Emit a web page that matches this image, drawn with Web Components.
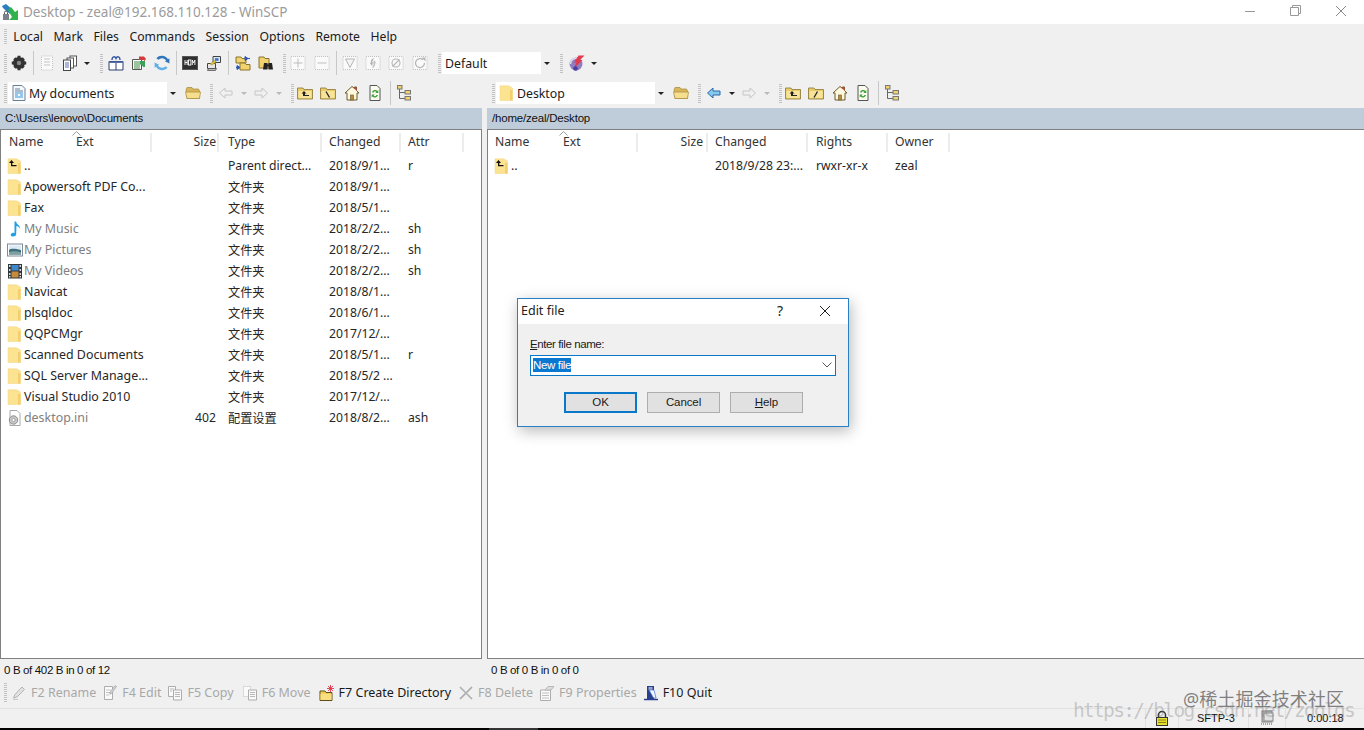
<!DOCTYPE html>
<html>
<head>
<meta charset="utf-8">
<title>WinSCP</title>
<style>
  html, body { margin: 0; height: 730px; overflow: hidden; background: #f0f0f0; }
  body { font: 12.5px "Noto Sans", "Noto Sans CJK SC", sans-serif; color: #1a1a1a; position: relative; }
  .app { display: flex; flex-direction: column; height: 730px; }
  .panels { display: flex; flex: 1; min-height: 0; }
</style>
</head>
<body>
<div class="app">
  <title-bar></title-bar>
  <menu-bar></menu-bar>
  <tool-strip>
    <tb-grip></tb-grip>
    <tb-icon name="gear"></tb-icon>
    <tb-sep m="3"></tb-sep>
    <tb-icon name="docdis" m="1"></tb-icon>
    <tb-icon name="copies"></tb-icon>
    <tb-arrow></tb-arrow>
    <tb-grip m="8"></tb-grip>
    <tb-icon name="queue" m="1"></tb-icon>
    <tb-icon name="transfer"></tb-icon>
    <tb-icon name="sync"></tb-icon>
    <tb-sep m="3"></tb-sep>
    <tb-icon name="hom" m="1"></tb-icon>
    <tb-icon name="putty" m="1"></tb-icon>
    <tb-sep m="3"></tb-sep>
    <tb-icon name="compare" m="2"></tb-icon>
    <tb-icon name="find" m="0"></tb-icon>
    <tb-grip m="6"></tb-grip>
    <tb-icon name="plus"></tb-icon>
    <tb-icon name="minus" m="1"></tb-icon>
    <tb-sep m="3"></tb-sep>
    <tb-icon name="funnel" m="1"></tb-icon>
    <tb-icon name="swapdis"></tb-icon>
    <tb-icon name="nodis"></tb-icon>
    <tb-icon name="rotdis" m="1"></tb-icon>
    <tb-grip m="7"></tb-grip>
    <tool-combo w="111" m="1">Default</tool-combo>
    <tb-grip m="7"></tb-grip>
    <tb-icon name="bolt" m="2"></tb-icon>
    <tb-arrow m="0"></tb-arrow>
  </tool-strip>
  <div class="panels">
    <file-panel path="C:\Users\lenovo\Documents" status="0 B of 402 B in 0 of 12" side="left">
      <path-toolbar slot="bar" label="My documents" combo-icon="mydocs" back="off" root="back"></path-toolbar>
      <file-head slot="head" side="left" labels="Name|Ext|Size|Type|Changed|Attr"></file-head>
      <file-row side="left" icon="up" name=".." cells="|Parent direct...|2018/9/1...|r"></file-row>
      <file-row side="left" icon="folder" name="Apowersoft PDF Co..." cells="|文件夹|2018/9/1...|"></file-row>
      <file-row side="left" icon="folder" name="Fax" cells="|文件夹|2018/5/1...|"></file-row>
      <file-row side="left" icon="music" name="My Music" dim cells="|文件夹|2018/2/2...|sh"></file-row>
      <file-row side="left" icon="picture" name="My Pictures" dim cells="|文件夹|2018/2/2...|sh"></file-row>
      <file-row side="left" icon="video" name="My Videos" dim cells="|文件夹|2018/2/2...|sh"></file-row>
      <file-row side="left" icon="folder" name="Navicat" cells="|文件夹|2018/8/1...|"></file-row>
      <file-row side="left" icon="folder" name="plsqldoc" cells="|文件夹|2018/6/1...|"></file-row>
      <file-row side="left" icon="folder" name="QQPCMgr" cells="|文件夹|2017/12/...|"></file-row>
      <file-row side="left" icon="folder" name="Scanned Documents" cells="|文件夹|2018/5/1...|r"></file-row>
      <file-row side="left" icon="folder" name="SQL Server Manage..." cells="|文件夹|2018/5/2 ...|"></file-row>
      <file-row side="left" icon="folder" name="Visual Studio 2010" cells="|文件夹|2017/12/...|"></file-row>
      <file-row side="left" icon="ini" name="desktop.ini" dim cells="402|配置设置|2018/8/2...|ash"></file-row>
    </file-panel>
    <file-panel path="/home/zeal/Desktop" status="0 B of 0 B in 0 of 0" side="right">
      <path-toolbar slot="bar" label="Desktop" combo-icon="folder" back="on" root="slash"></path-toolbar>
      <file-head slot="head" side="right" labels="Name|Ext|Size|Changed|Rights|Owner"></file-head>
      <file-row side="right" icon="up" name=".." cells="|2018/9/28 23:...|rwxr-xr-x|zeal"></file-row>
    </file-panel>
  </div>
  <fkey-bar></fkey-bar>
  <status-strip></status-strip>
</div>
<edit-dialog></edit-dialog>
<water-mark></water-mark>

<script>
// --- icon shapes, all on a 16x16 box ---
const folderBody = (extra = '') => `<path d="M1 .8h8.500L13.500 3v12.500H1z" fill="#fce391" stroke="#f3d582" stroke-width=".5"/><path d="M11 5h2.500v10.500H11z" fill="#f4cf70"/>${extra}`;
const openFolder = '<path d="M1 5l1-2.500h5l1 1.500h5.500l1 2v7.500H2z" fill="#d9b659" stroke="#a68a3a" stroke-width=".7"/><path d="M.5 7h15l-1 6.500H2z" fill="#f5de8e" stroke="#a68a3a" stroke-width=".7"/>';
const flatFolder = (inner) => `<path d="M.5 3h5.500l1 1.500h8.500V14H.5z" fill="#e9cd6b" stroke="#8c7430" stroke-width=".8"/><path d="M1.500 6h13v7h-13z" fill="#f7e39a"/>${inner}`;
const dots = 'fill="#fafafa" stroke="#b5b5b5" stroke-width=".8" stroke-dasharray="1 1"';
const ICONS = {
  gear: '<g fill="#333"><circle cx="8" cy="8" r="6"/><path d="M6.500 .8h3v3h-3zM6.500 12.200h3v3h-3zM.8 6.500h3v3h-3zM12.200 6.500h3v3h-3z"/><path d="M2.300 4.400l2.100-2.100 2 2-2.100 2.100zM9.600 11.700l2.100-2.100 2 2-2.100 2.100zM11.700 2.300l2.100 2.100-2 2-2.100-2.100zM4.400 9.600l2.100 2.100-2 2-2.100-2.100z"/></g><circle cx="8" cy="8" r="2.200" fill="#888"/>',
  docdis: `<rect x="2.500" y="1" width="11" height="14" ${dots}/><path d="M5 4h6M5 7h6M5 10h6" stroke="#c4c4c4"/>`,
  copies: '<rect x="8" y="1" width="6.500" height="10" fill="#fff" stroke="#555"/><rect x="5" y="3" width="6.500" height="10" fill="#fff" stroke="#555"/><rect x="1.500" y="5" width="7" height="10.500" fill="#fff" stroke="#444"/><path d="M3 8h4M3 10h4M3 12h4" stroke="#5a6fb0"/>',
  queue: '<path d="M1 6.500h14V15H1z" fill="#fff" stroke="#2c3f70"/><path d="M8 6.500V15" stroke="#2c3f70"/><path d="M1 6.500h14v1.500H1z" fill="#5470b0"/><path d="M4 5c0-4 3-4 4-1.500C9 1 12 1 12 5" fill="none" stroke="#3050a0" stroke-width="1.300"/>',
  transfer: '<path d="M1.500 4.500h9v10h-9z" fill="#fff" stroke="#555"/><path d="M3 7h6M3 9h6M3 11h6M3 13h6" stroke="#3a8a3a"/><path d="M8 1.500l5 0 2 2.500-2 2.500V5H8z" fill="#d63b3b"/><path d="M9 6h5v6h-1.500L10 9.500H9z" fill="#3aa35a"/>',
  sync: '<path d="M8 .8a7.200 7.200 0 0 1 6 3.400l1.400-.9v5.200l-4.500-2.200 1.200-.8A4.800 4.800 0 0 0 4.500 4.800L2.300 3.200A7.200 7.200 0 0 1 8 .8z" fill="#2f76bd"/><path d="M8 15.200a7.200 7.200 0 0 1-6-3.400l-1.400.9V7.500l4.500 2.200-1.200.8a4.800 4.800 0 0 0 7.600.7l2.200 1.600A7.200 7.200 0 0 1 8 15.200z" fill="#5fb0ea"/>',
  hom: '<rect x=".5" y="1.500" width="15" height="13" fill="#2f2f2f" stroke="#555"/><path d="M3 5v5M3 7.500h2.200M5.200 5v5M10.300 10V5l1.300 3 1.300-3v5" stroke="#fff" stroke-width=".9" fill="none"/><rect x="6.500" y="5" width="2.400" height="5" fill="none" stroke="#fff" stroke-width=".9"/>',
  putty: '<path d="M1.500 8.500h8v5h-8z" fill="#e6e6e6" stroke="#444"/><path d="M2.500 13.500h8l-1 2h-8z" fill="#bbb" stroke="#444" stroke-width=".7"/><path d="M7 1.500h7.500v6H7z" fill="#d8e6f5" stroke="#444"/><path d="M9 3.200h3.500v2.600H9z" fill="#3f6fbd"/><path d="M4 9l5-3.500 1 1.500-4 3z" fill="#e9cd35" stroke="#8a7a20" stroke-width=".5"/>',
  compare: '<path d="M1 2h5l1 1.500h4V8H1z" fill="#f1d26d" stroke="#8a7330"/><path d="M5 8h5l1 1.500h4V15H5z" fill="#f1d26d" stroke="#8a7330"/><path d="M10 1.500l3 2-3 2zM15 3.500h-3" fill="#2f55b5" stroke="#2f55b5"/><path d="M5 12.500l-3-2v4zM1 12.500h2" fill="#2f55b5" stroke="#2f55b5"/>',
  find: '<path d="M1 2h5l1 1.500h4V13H1z" fill="#f1d26d" stroke="#8a7330"/><path d="M6 8h3.500v6.500H5z M10.500 8H14l1 6.500h-4.500z" fill="#222"/><path d="M8.500 9.500h3v2h-3z" fill="#222"/>',
  plus: `<rect x="1" y="1.500" width="14" height="13" ${dots}/><path d="M8 3.500v9M3.500 8h9" stroke="#bdbdbd"/>`,
  minus: `<rect x="1" y="1.500" width="14" height="13" ${dots}/><path d="M3.500 8h9" stroke="#bdbdbd"/>`,
  funnel: `<rect x="1" y="1.500" width="14" height="13" ${dots}/><path d="M3.500 4h9L8 12.500z" fill="#f4f4f4" stroke="#b5b5b5"/>`,
  swapdis: `<rect x="1" y="1.500" width="14" height="13" ${dots}/><path d="M9 3a4 4 0 0 0-3 5l-1.500-.5L7 11l1-4-1.200.7" fill="#b0b0b0"/><path d="M7 13a4 4 0 0 0 3-5l1.500.5L9 5 8 9l1.200-.7" fill="#c0c0c0"/>`,
  nodis: `<rect x="1" y="1.500" width="14" height="13" ${dots}/><circle cx="8" cy="8" r="4" fill="none" stroke="#b5b5b5" stroke-width="1.100"/><path d="M4.500 11.500l7-7" stroke="#b5b5b5" stroke-width="1.100"/>`,
  rotdis: `<rect x="1" y="1.500" width="14" height="13" ${dots}/><path d="M11 4.700A4.500 4.500 0 1 0 12.500 8" fill="none" stroke="#b5b5b5" stroke-width="1.300"/><path d="M9.500 2.500h4v4z" fill="#b5b5b5"/>`,
  bolt: '<circle cx="7" cy="9" r="6.500" fill="#8e7fc0"/><path d="M1.500 9a5.500 5.500 0 0 1 8-5" fill="none" stroke="#dcdcec" stroke-width="1.500"/><path d="M9.500 .5h6L11 5h2.500L4.500 14l3-6.500H5z" fill="#e33a4d"/><circle cx="6.500" cy="13.500" r="2.300" fill="#4a3fa0"/>',
  mydocs: '<path d="M2 .5h9l3 3v12H2z" fill="#f3f8fd" stroke="#6b7f93"/><path d="M4 4h5M4 6h8" stroke="#6b7f93"/><path d="M4 8h8M4 10h3M9 10h3M4 12h8" stroke="#3a93d6" stroke-width="1.100"/>',
  folder: folderBody(),
  up: folderBody('<path d="M2 5l2.500-3L7 5H5.300v2h4.200v1.300H4V5z" fill="#111"/>'),
  music: '<path d="M7.500 .5h1.600c.3 3 4.400 3.500 3.900 7.500C12.300 5.900 10.600 5.300 9.400 5.100l-.2 7.900c0 1.800-1.700 2.700-3.400 2.500C4 15.300 3.300 14 4 12.900c.9-1.200 2.400-1.300 3.500-.8z" fill="#21a0e3"/>',
  picture: '<rect x=".5" y="2" width="15" height="12" fill="#fff" stroke="#7d8a99"/><rect x="2" y="3.500" width="12" height="9" fill="#dbe9f4"/><path d="M2 8c3-2 6-1 12 0v4.500H2z" fill="#3f6f7f"/><path d="M2 10c4-1 8-1 12 .5v2H2z" fill="#7fa0a0"/>',
  video: '<rect x="1" y="1" width="14" height="14.500" fill="#33383d"/><path d="M2 2h1.500v2H2zM2 6h1.500v2H2zM2 10h1.500v2H2zM2 13h1.500v1.500H2zM12.500 2H14v2h-1.500zM12.500 6H14v2h-1.500zM12.500 10H14v2h-1.500zM12.500 13H14v1.500h-1.500z" fill="#d8d8d8"/><rect x="4.500" y="2" width="7" height="5.500" fill="#3e87c8"/><rect x="4.500" y="8.500" width="7" height="6" fill="#c58a3c"/>',
  ini: '<path d="M3 .5h7l3 3v12H3z" fill="#fff" stroke="#a8a8a8"/><circle cx="6.500" cy="10" r="4.200" fill="#c8c8c8" stroke="#8e8e8e"/><circle cx="6.500" cy="10" r="1.600" fill="#fff" stroke="#8e8e8e" stroke-width=".7"/>',
  openfolder: openFolder,
  backoff: '<path d="M7 3L1.500 8 7 13v-3h7V6H7z" fill="#f0f0f0" stroke="#c6c6c6"/>',
  backon: '<path d="M7 3L1.500 8 7 13v-3h7V6H7z" fill="#86c7ee" stroke="#2a6aa8"/>',
  fwd: '<path d="M9 3l5.500 5L9 13v-3H2V6h7z" fill="#f0f0f0" stroke="#c6c6c6"/>',
  parent: flatFolder('<path d="M6 11V8.500H4.500L7 6l2.500 2.500H8V10h4v1z" fill="#222"/>'),
  rootback: flatFolder('<path d="M6 6.500l3.500 6" stroke="#222" stroke-width="1.300"/>'),
  rootslash: flatFolder('<path d="M9.500 6.500L6 12.500" stroke="#222" stroke-width="1.300"/>'),
  home: '<path d="M8 1.500L1 8h2v7h10V8h2L12.500 5.500V2h-2v1.500z" fill="#fff8e0" stroke="#6b5a2a"/><path d="M8 1.500l2.500 2V2h2v3.500L15 8z" fill="#c0473a"/><rect x="6.500" y="10" width="3" height="5" fill="#b58a3c" stroke="#6b5a2a" stroke-width=".6"/>',
  refresh: '<path d="M3 .5h7l3 3v12H3z" fill="#fbfbee" stroke="#555"/><path d="M10.500 6A3.200 3.200 0 0 0 5 7.500l1.600.1A1.800 1.800 0 0 1 9.400 7L8.300 8h3V5z" fill="#3ea43a"/><path d="M5.500 11.500A3.200 3.200 0 0 0 11 10l-1.600-.1A1.800 1.800 0 0 1 6.600 10.500L7.700 9.500h-3v3z" fill="#3ea43a"/>',
  tree: '<path d="M3.500 4v9.500H9M3.500 7.500H9" fill="none" stroke="#666"/><rect x="1.500" y=".5" width="4.500" height="3.500" fill="#f1d26d" stroke="#777"/><rect x="9" y="5.500" width="5.500" height="3.500" fill="#f1d26d" stroke="#777"/><rect x="9" y="11.500" width="5.500" height="3.500" fill="#f1d26d" stroke="#777"/>',
  lock: '<path d="M4.500 8V5a3.500 3.500 0 0 1 7 0v3" fill="none" stroke="#333" stroke-width="1.500"/><rect x="2.500" y="7.500" width="11" height="8" fill="#e8e22a" stroke="#333"/><path d="M4 10h8M4 12.500h8" stroke="#87821c"/>',
  monitor: '<rect x="3" y="1" width="10" height="11" fill="#c5c5c5" stroke="#7f7f7f"/><rect x="5" y="3" width="9" height="8" fill="#e2e2e2" stroke="#8a8a8a"/><path d="M2 14h12" stroke="#8a8a8a" stroke-width="1.500" stroke-dasharray="1 1"/>',
  pencil: '<path d="M11 2l2.500 2.500L6 12l-3.500 1L4 9.500z" fill="#e2e2e2" stroke="#b4b4b4"/><path d="M2 14.500h5" stroke="#c8c8c8"/>',
  editdoc: '<path d="M2.500 1.500h8v13h-8z" fill="#fafafa" stroke="#adadad"/><path d="M4 5h5M4 7.500h5M4 10h3" stroke="#c4c4c4"/><path d="M13 .5l1.500 1-5 7-1.700.7.200-1.700z" fill="#d4d4d4" stroke="#a2a2a2" stroke-width=".7"/>',
  copydis: '<path d="M1.500 1.500h7v10h-7z" fill="#fafafa" stroke="#adadad"/><path d="M6.500 5h8v10h-8z" fill="#fafafa" stroke="#adadad"/><path d="M3 4h4M3 6h2M8 7.500h5M8 9.500h5M8 11.500h5" stroke="#b8b8b8"/>',
  movedis: '<path d="M1.500 1.500h7v10h-7z" fill="#fafafa" stroke="#bcbcbc" stroke-dasharray="1 1"/><path d="M6.500 5h8v10h-8z" fill="#fafafa" stroke="#adadad"/><path d="M8 7.500h5M8 9.500h5M8 11.500h5" stroke="#b8b8b8"/>',
  newdir: '<path d="M1 6h5l1 1.500h6V15.500H1z" fill="#f1cf5a" stroke="#5f4c1c"/><path d="M1.500 9h11v6h-11z" fill="#f8de7f"/><path d="M11.500 0v7M8 3.500h7M9 1l5 5M14 1L9 6" stroke="#e3324a" stroke-width=".9"/>',
  del: '<path d="M2 2l12 12M14 2L2 14" stroke="#a8a8a8" stroke-width="1.600"/><path d="M2.500 2l11 11" stroke="#d0d0d0" stroke-width=".6"/>',
  props: '<path d="M1.500 5h10v10.500h-10z" fill="#fafafa" stroke="#adadad"/><path d="M3 8h7M3 10.500h7M3 13h7" stroke="#c0c0c0"/><path d="M6 5l3-3.500h6L12 5z" fill="#dcdcdc" stroke="#adadad" stroke-width=".8"/>',
  quit: '<path d="M4 1h7v13H4z" fill="#2b3f8f"/><path d="M5.500 2h4v3h-4z" fill="#9aa5cc"/><path d="M6 5h5l2 8h-2.500z" fill="#f4f8ff" stroke="#3f6fd0" stroke-width=".7"/><path d="M1 14.500h14" stroke="#2b3f8f" stroke-width="1.500"/>'
};

class WinIcon extends HTMLElement {
  connectedCallback() {
    const size = this.getAttribute('size') || 16;
    this.attachShadow({ mode: 'open' }).innerHTML = `
      <style>:host { display: inline-flex; flex: none; } svg { display: block; }</style>
      <svg width="${size}" height="${size}" viewBox="0 0 16 16">${ICONS[this.getAttribute('name')] || ''}</svg>`;
  }
}
customElements.define('win-icon', WinIcon);

// --- window chrome ---
class TitleBar extends HTMLElement {
  constructor() {
    super();
    this.attachShadow({ mode: 'open' }).innerHTML = `
      <style>
        :host { display: flex; align-items: center; height: 24px; background: #fff; color: #9b9b9b; font-size: 13.5px; }
        .logo { margin: 0 4px 0 2px; display: block; }
        .text { flex: 1; padding-bottom: 1px; }
        .ctl { width: 46px; height: 21px; margin-bottom: 3px; display: flex; align-items: center; justify-content: center; }
        svg { display: block; }
      </style>
      <svg class="logo" width="17" height="18" viewBox="0 0 17 18">
        <path d="M0 3l4-2 7 6-3 4-7-6z" fill="#2b7fc0"/>
        <path d="M6 7l3-3 4 5 3-2v10H7l3-3z" fill="#2fb34a"/>
        <rect x="1" y="11" width="6" height="6" fill="#7d8289"/><path d="M2.500 11V9.500a1.500 1.500 0 0 1 3 0V11" fill="none" stroke="#555"/>
      </svg>
      <span class="text">Desktop - zeal@192.168.110.128 - WinSCP</span>
      <span class="ctl"><svg width="10" height="10"><path d="M0 5.500h10" stroke="#999"/></svg></span>
      <span class="ctl" style="margin-left:-1px"><svg width="11" height="11"><path d="M.5 2.500h8v8h-8zM2.500 2.500v-2h8v8h-2" fill="none" stroke="#999"/></svg></span>
      <span class="ctl"><svg width="12" height="12"><path d="M1 1l10 10M11 1L1 11" stroke="#888"/></svg></span>`;
  }
}
customElements.define('title-bar', TitleBar);

class MenuBar extends HTMLElement {
  constructor() {
    super();
    const items = ['Local', 'Mark', 'Files', 'Commands', 'Session', 'Options', 'Remote', 'Help'];
    this.attachShadow({ mode: 'open' }).innerHTML = `
      <style>
        :host { display: flex; align-items: center; height: 25px; padding-left: 4px; background: #f0f0f0; font-size: 12.2px; color: #1a1a1a; }
        .grip { width: 3px; height: 15px; background: repeating-linear-gradient(#c4c4c4 0 1px, transparent 1px 2px); margin-right: 1px; }
        span { padding: 0 5.3px; }
      </style>
      <div class="grip"></div>${items.map(i => `<span>${i}</span>`).join('')}`;
  }
}
customElements.define('menu-bar', MenuBar);

// --- toolbars ---
class ToolStrip extends HTMLElement {
  constructor() {
    super();
    this.attachShadow({ mode: 'open' }).innerHTML = `
      <style>:host { display: flex; align-items: center; height: 28px; padding-left: 4px; box-sizing: border-box; background: #f0f0f0; }</style>
      <slot></slot>`;
  }
}
customElements.define('tool-strip', ToolStrip);

class TbGrip extends HTMLElement {
  connectedCallback() {
    this.attachShadow({ mode: 'open' }).innerHTML = `
      <style>:host { display: block; flex: none; width: 3px; height: 19px; margin-left: ${this.getAttribute('m') || 0}px; background: repeating-linear-gradient(#c2c2c2 0 1px, transparent 1px 2px); }</style>`;
  }
}
customElements.define('tb-grip', TbGrip);

class TbSep extends HTMLElement {
  connectedCallback() {
    this.attachShadow({ mode: 'open' }).innerHTML = `
      <style>:host { display: block; flex: none; width: 1px; height: 24px; margin-left: ${this.getAttribute('m') || 0}px; background: #c8c8c8; }</style>`;
  }
}
customElements.define('tb-sep', TbSep);

class TbIcon extends HTMLElement {
  connectedCallback() {
    this.attachShadow({ mode: 'open' }).innerHTML = `
      <style>:host { display: flex; flex: none; width: 23px; justify-content: center; margin-left: ${this.getAttribute('m') || 0}px; }</style>
      <win-icon name="${this.getAttribute('name')}"></win-icon>`;
  }
}
customElements.define('tb-icon', TbIcon);

class TbArrow extends HTMLElement {
  connectedCallback() {
    const col = this.getAttribute('off') !== null ? '#b9b9b9' : '#222';
    this.attachShadow({ mode: 'open' }).innerHTML = `
      <style>:host { display: flex; flex: none; width: 11px; justify-content: center; margin-left: ${this.getAttribute('m') || 0}px; }
      i { border: 3px solid transparent; border-top: 3px solid ${col}; border-bottom: 0; width: 0; height: 0; }</style><i></i>`;
  }
}
customElements.define('tb-arrow', TbArrow);

class ToolCombo extends HTMLElement {
  connectedCallback() {
    const w = this.getAttribute('w');
    this.attachShadow({ mode: 'open' }).innerHTML = `
      <style>
        :host { display: flex; flex: none; align-items: center; width: ${w}px; height: 22px; margin-left: ${this.getAttribute('m') || 0}px; background: #fff; font-size: 12.3px; color: #1a1a1a; }
        .txt { flex: 1; display: flex; align-items: center; gap: 2px; padding-left: 3px; }
        .drop { width: 12px; height: 22px; background: #f0f0f0; display: flex; align-items: center; justify-content: center; }
        i { border: 3px solid transparent; border-top: 3px solid #222; border-bottom: 0; }
      </style>
      <div class="txt"><slot></slot></div><div class="drop"><i></i></div>`;
  }
}
customElements.define('tool-combo', ToolCombo);

class PathToolbar extends HTMLElement {
  connectedCallback() {
    const on = this.getAttribute('back') === 'on';
    this.attachShadow({ mode: 'open' }).innerHTML = `
      <style>:host { display: block; width: 100%; }</style>
      <tool-strip>
        <tb-grip></tb-grip>
        <tool-combo w="171" m="1"><win-icon name="${this.getAttribute('combo-icon')}"></win-icon>${this.getAttribute('label')}</tool-combo>
        <tb-icon name="openfolder" m="2"></tb-icon>
        <tb-grip m="6"></tb-grip>
        <tb-icon name="${on ? 'backon' : 'backoff'}" m="1"></tb-icon>
        <tb-arrow ${on ? '' : 'off'} m="1"></tb-arrow>
        <tb-icon name="fwd" m="0"></tb-icon>
        <tb-arrow off m="1"></tb-arrow>
        <tb-grip m="7"></tb-grip>
        <tb-icon name="parent" m="-1"></tb-icon>
        <tb-icon name="root${this.getAttribute('root')}" m="0"></tb-icon>
        <tb-icon name="home" m="1"></tb-icon>
        <tb-icon name="refresh"></tb-icon>
        <tb-sep m="4"></tb-sep>
        <tb-icon name="tree" m="1"></tb-icon>
      </tool-strip>`;
  }
}
customElements.define('path-toolbar', PathToolbar);

// --- file panels ---
const COLS = {
  left: '67px 84px 67px 103px 79px 63px',
  right: '67px 83px 70px 100px 80px 62px'
};

class FilePanel extends HTMLElement {
  connectedCallback() {
    const left = this.getAttribute('side') === 'left';
    this.attachShadow({ mode: 'open' }).innerHTML = `
      <style>
        :host { display: flex; flex-direction: column; ${left ? 'width: 482px; margin-right: 5px;' : 'flex: 1; min-width: 0;'} }
        .bar { height: 29px; padding-top: 2px; ${left ? '' : 'padding-left: 1px;'} }
        .path { height: 21px; background: #bfcddb; padding-left: 5px; font: 11.5px/21px "Liberation Sans", sans-serif; letter-spacing: -.2px; color: #111; box-sizing: border-box; }
        .list { flex: 1; min-height: 0; background: #fff; border: 1px solid #808080; ${left ? '' : 'border-right: 0;'} }
        .status { height: 22px; padding-left: 4px; font: 11.5px/22px "Liberation Sans", sans-serif; letter-spacing: -.35px; color: #111; }
      </style>
      <div class="bar"><slot name="bar"></slot></div>
      <div class="path">${this.getAttribute('path')}</div>
      <div class="list"><slot name="head"></slot><slot></slot></div>
      <div class="status">${this.getAttribute('status')}</div>`;
  }
}
customElements.define('file-panel', FilePanel);

class FileHead extends HTMLElement {
  connectedCallback() {
    const side = this.getAttribute('side');
    const labels = this.getAttribute('labels').split('|');
    this.attachShadow({ mode: 'open' }).innerHTML = `
      <style>
        :host { display: grid; grid-template-columns: ${COLS[side]}; justify-content: start; height: 25px; align-items: center; font-size: 12.2px; color: #333; }
        div { height: 19px; line-height: 18px; padding-left: 7px; box-sizing: border-box; white-space: nowrap; position: relative; }
        div:nth-of-type(1) { padding-left: ${side === 'left' ? 8 : 7}px; }
        div:nth-of-type(2) { padding-left: 8px; }
        div:nth-of-type(4) { padding-left: ${side === 'left' ? 9 : 7}px; }
        div:nth-of-type(5) { padding-left: ${side === 'left' ? 7 : 8}px; }
        .sep { border-right: 2px solid #ececec; }
        .num { text-align: right; padding-right: ${side === 'left' ? 1 : 3}px; }
        .caret { position: absolute; left: 4px; top: -2px; }
      </style>
      ${labels.map((l, i) => `<div class="${i === 0 ? '' : 'sep'} ${i === 2 ? 'num' : ''}">${i === 1 ? '<svg class="caret" width="9" height="5"><path d="M.5 4.500l4-4 4 4" fill="none" stroke="#999"/></svg>' : ''}${l}</div>`).join('')}`;
  }
}
customElements.define('file-head', FileHead);

class FileRow extends HTMLElement {
  connectedCallback() {
    const side = this.getAttribute('side');
    const dim = this.hasAttribute('dim');
    const cells = this.getAttribute('cells').split('|');
    this.attachShadow({ mode: 'open' }).innerHTML = `
      <style>
        :host { display: grid; grid-template-columns: ${COLS[side]}; justify-content: start; height: 21px; align-items: center; font-size: 12.2px; color: #262626; }
        div { white-space: nowrap; padding-left: 7px; overflow: hidden; box-sizing: border-box; }
        div:nth-of-type(3) { padding-left: ${side === 'left' ? 9 : 7}px; }
        div:nth-of-type(4) { padding-left: ${side === 'left' ? 7 : 8}px; }
        .name { grid-column: span 2; display: flex; align-items: center; padding-left: 6px; overflow: visible; font-size: 12.4px; }
        .name span { margin-left: 1px; color: ${dim ? '#808080' : '#262626'}; }
        .num { text-align: right; padding-right: ${side === 'left' ? 3 : 5}px; }
      </style>
      <div class="name"><win-icon name="${this.getAttribute('icon')}"></win-icon><span>${this.getAttribute('name')}</span></div>
      ${cells.map((c, i) => `<div class="${i === 0 ? 'num' : ''}">${c}</div>`).join('')}`;
  }
}
customElements.define('file-row', FileRow);

// --- bottom bars ---
class FkeyBar extends HTMLElement {
  constructor() {
    super();
    const keys = [
      ['pencil', 'F2 Rename', 0, 6], ['editdoc', 'F4 Edit', 0, 6], ['copydis', 'F5 Copy', 0, 8], ['movedis', 'F6 Move', 0, 8],
      ['newdir', 'F7 Create Directory', 1, 7], ['del', 'F8 Delete', 0, 6], ['props', 'F9 Properties', 0, 6], ['quit', 'F10 Quit', 1, 0]
    ];
    this.attachShadow({ mode: 'open' }).innerHTML = `
      <style>
        :host { display: flex; align-items: center; height: 28px; padding: 0 0 4px 4px; border-bottom: 1px solid #e2e2e2; box-sizing: border-box; font-size: 12.5px; color: #a8a8a8; background: #f0f0f0; }
        .grip { width: 3px; height: 19px; margin-right: 4px; background: repeating-linear-gradient(#c2c2c2 0 1px, transparent 1px 2px); }
        .key { display: flex; align-items: center; gap: 4px; white-space: nowrap; }
        .on { color: #1a1a1a; }
      </style>
      <div class="grip"></div>
      ${keys.map(k => `<div class="key ${k[2] ? 'on' : ''}" style="margin-right:${k[3]}px"><win-icon name="${k[0]}"></win-icon>${k[1]}</div>`).join('')}`;
  }
}
customElements.define('fkey-bar', FkeyBar);

class StatusStrip extends HTMLElement {
  constructor() {
    super();
    this.attachShadow({ mode: 'open' }).innerHTML = `
      <style>
        :host { display: flex; flex-direction: column; height: 21px; font: 11px "Liberation Sans", sans-serif; color: #111; background: #f0f0f0; }
        .row { display: flex; justify-content: flex-end; height: 19px; }
        .cell { display: flex; align-items: center; box-sizing: border-box; border-left: 1px solid #e0e0e0; padding-bottom: 2px; white-space: nowrap; }
        .black { height: 2px; background: #000; display: flex; }
        .black i { display: block; width: 49px; height: 2px; margin-left: 489px; background: #333; }
      </style>
      <div class="row">
        <div class="cell" style="width:33px;padding-left:8px"><win-icon name="lock"></win-icon></div>
        <div class="cell" style="width:70px;padding-left:18px">SFTP-3</div>
        <div class="cell" style="width:37px;padding-left:10px"><win-icon name="monitor"></win-icon></div>
        <div class="cell" style="width:79px;padding-left:21px">0:00:18</div>
      </div>
      <div class="black"><i></i></div>`;
  }
}
customElements.define('status-strip', StatusStrip);

// --- modal dialog, sits over the panels ---
class EditDialog extends HTMLElement {
  constructor() {
    super();
    this.attachShadow({ mode: 'open' }).innerHTML = `
      <style>
        :host { position: absolute; left: 517px; top: 298px; width: 332px; height: 129px; box-sizing: border-box; display: flex; flex-direction: column; border: 1px solid #2a80c4; background: #f0f0f0; box-shadow: 2px 4px 14px rgba(0,0,0,.28); font-size: 12.5px; color: #1a1a1a; }
        .title { display: flex; align-items: center; height: 25px; box-sizing: border-box; padding: 0 0 2px 3px; background: #fff; color: #222; }
        .title .t { flex: 1; }
        .q { width: 16px; font-size: 14px; margin-right: 31px; text-align: center; }
        .x { margin-right: 17px; display: block; }
        .body { flex: 1; padding: 12px 12px 0; }
        .lab { font: 11.5px/16px "Liberation Sans", sans-serif; letter-spacing: -.4px; margin-bottom: 3px; }
        u { text-underline-offset: 1px; }
        .input { height: 21px; border: 1px solid #0a78c8; background: #fff; box-sizing: border-box; display: flex; align-items: center; padding: 0 0 1px 2px; font: 11.5px "Liberation Sans", sans-serif; }
        .sel { background: #0a78d0; color: #fff; padding: 1px 0; flex: none; letter-spacing: -.35px; }
        .sp { flex: 1; }
        .btns { display: flex; gap: 10px; margin: 16px 0 0 34px; }
        .btn { width: 73px; height: 21px; box-sizing: border-box; background: #e1e1e1; border: 1px solid #adadad; text-align: center; font: 11.5px/19px "Liberation Sans", sans-serif; letter-spacing: -.1px; }
        .def { border: 2px solid #0a78c8; line-height: 17px; }
      </style>
      <div class="title"><span class="t">Edit file</span><span class="q">?</span>
        <svg class="x" width="12" height="12"><path d="M1 1l10 10M11 1L1 11" stroke="#222"/></svg></div>
      <div class="body">
        <div class="lab"><u>E</u>nter file name:</div>
        <div class="input"><span class="sel">New file</span><span class="sp"></span>
          <svg width="10" height="6" style="margin-right:3px"><path d="M.5 .5l4.500 4.500 4.500-4.500" fill="none" stroke="#555"/></svg></div>
        <div class="btns">
          <div class="btn def">OK</div><div class="btn">Cancel</div><div class="btn"><u>H</u>elp</div>
        </div>
      </div>`;
  }
}
customElements.define('edit-dialog', EditDialog);

// --- image-host stamps that lie over the corner ---
class WaterMark extends HTMLElement {
  constructor() {
    super();
    this.attachShadow({ mode: 'open' }).innerHTML = `
      <style>
        :host { position: absolute; left: 0; top: 0; width: 1364px; height: 730px; pointer-events: none; }
        .a { position: absolute; left: 1183px; top: 685px; font: 18px "Noto Sans", "Noto Sans CJK SC", sans-serif; color: rgba(90,90,90,.75); white-space: nowrap; letter-spacing: .1px; }
        .b { position: absolute; left: 1073px; top: 699px; font: 19.5px "DejaVu Sans Mono", monospace; color: rgba(120,120,120,.35); white-space: nowrap; letter-spacing: -1.7px; }
      </style>
      <div class="a">@稀土掘金技术社区</div>
      <div class="b">https://blog.csdn.net/zdqlgs</div>`;
  }
}
customElements.define('water-mark', WaterMark);
</script>
</body>
</html>
